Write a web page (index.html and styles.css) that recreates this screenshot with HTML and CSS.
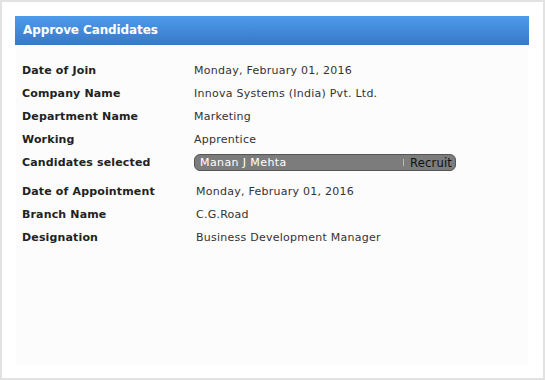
FILE: index.html
```html
<!DOCTYPE html>
<html lang="en">
<head>
    <meta charset="UTF-8">
    <meta name="viewport" content="width=device-width, initial-scale=1.0">
    <title>Approve Candidates</title>
    <link rel="stylesheet" href="styles.css">
</head>
<body>
    <div class="frame">
        <div class="panel-header">Approve Candidates</div>
        <div class="panel-body">
            <table class="details">
                <tr>
                    <th>Date of Join</th>
                    <td>Monday, February 01, 2016</td>
                </tr>
                <tr>
                    <th>Company Name</th>
                    <td>Innova Systems (India) Pvt. Ltd.</td>
                </tr>
                <tr>
                    <th>Department Name</th>
                    <td>Marketing</td>
                </tr>
                <tr>
                    <th>Working</th>
                    <td>Apprentice</td>
                </tr>
                <tr>
                    <th>Candidates selected</th>
                    <td>
                        <div class="candidate">
                            <span class="candidate-name">Manan J Mehta</span>
                            <span class="candidate-sep"></span>
                            <span class="candidate-action">Recruit</span>
                        </div>
                    </td>
                </tr>
            </table>
            <table class="details details-second">
                <tr>
                    <th>Date of Appointment</th>
                    <td>Monday, February 01, 2016</td>
                </tr>
                <tr>
                    <th>Branch Name</th>
                    <td>C.G.Road</td>
                </tr>
                <tr>
                    <th>Designation</th>
                    <td>Business Development Manager</td>
                </tr>
            </table>
        </div>
    </div>
</body>
</html>
```

FILE: styles.css
```css
body {
    margin: 0;
    padding: 0;
    background-color: #fff;
    font-family: 'DejaVu Sans', Verdana, sans-serif;
    font-size: 11px;
    color: #333;
}

.frame {
    box-sizing: border-box;
    width: 545px;
    height: 380px;
    border: 2px solid #e2e2e2;
    padding: 14px 14px 13px 13px;
    display: flex;
    flex-direction: column;
}

.panel-header {
    height: 29px;
    line-height: 28px;
    padding-left: 8px;
    color: #fff;
    font-weight: bold;
    font-size: 12px;
    letter-spacing: -0.1px;
    background: linear-gradient(to bottom, #4d9cec, #3a77c7);
}

.panel-body {
    flex: 1;
    margin: 0 1px;
    background-color: #fcfcfc;
    padding-top: 14px;
}

.details {
    border-collapse: collapse;
    margin-left: 3px;
}

.details th {
    width: 172px;
    text-align: left;
    font-weight: bold;
    color: #222;
    letter-spacing: 0.15px;
    padding: 0 0 0 3px;
    height: 23px;
}

.details td {
    padding: 0;
    height: 23px;
    color: #333;
    letter-spacing: 0.25px;
}

.details-second {
    margin-top: 6px;
}

.details-second th {
    width: 174px;
}

.candidate {
    box-sizing: border-box;
    width: 262px;
    height: 17px;
    display: flex;
    align-items: center;
    background-color: #7c7c7c;
    border: 1px solid #555;
    border-radius: 6px;
    padding: 0 3px 0 5px;
}

.candidate-name {
    flex: 1;
    color: #fff;
    font-size: 11px;
    letter-spacing: 0.4px;
}

.candidate-sep {
    width: 1px;
    height: 7px;
    background-color: #bbb;
    margin-right: 6px;
}

.candidate-action {
    color: #111;
    font-size: 11.5px;
    letter-spacing: 0.2px;
}
```
